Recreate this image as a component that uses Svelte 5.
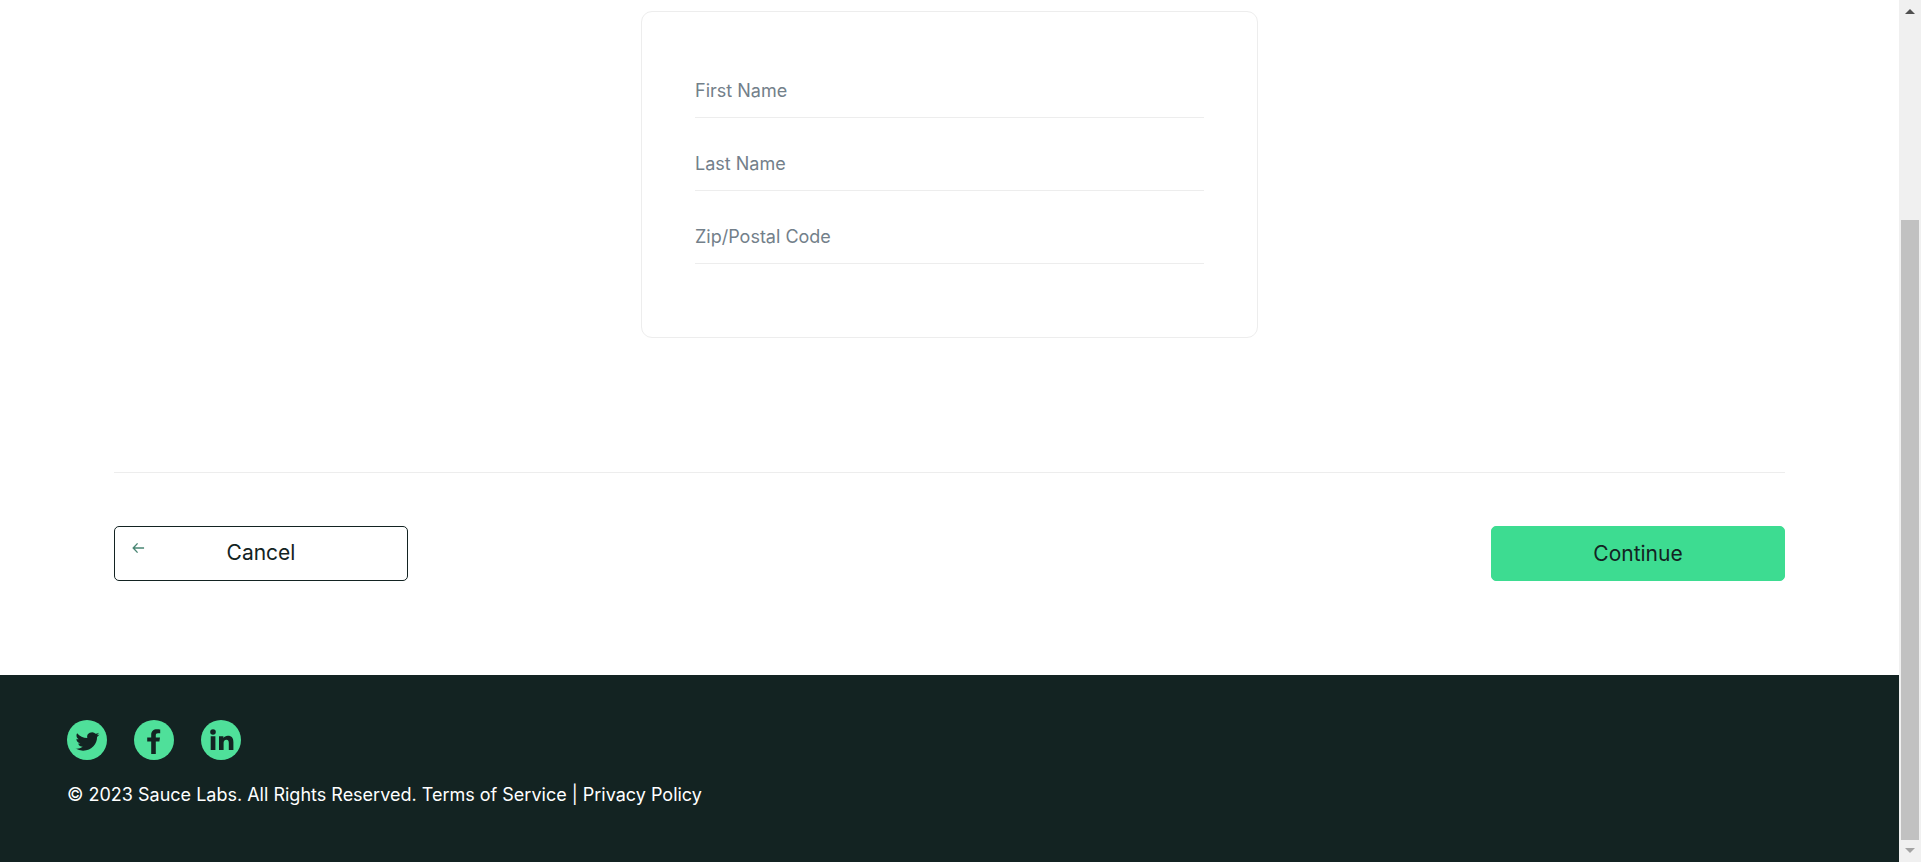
<script>
  const fields = [
    { id: 'first-name', label: 'First Name' },
    { id: 'last-name', label: 'Last Name' },
    { id: 'postal-code', label: 'Zip/Postal Code' }
  ];
</script>

<div class="window">
  <div class="page">
    <form class="checkout" onsubmit={(e) => e.preventDefault()}>
      <div class="card">
        {#each fields as field}
          <input id={field.id} type="text" placeholder={field.label} aria-label={field.label} />
        {/each}
      </div>
      <div class="actions">
        <button type="button" class="cancel">
          <svg class="back" viewBox="0 0 14 12" aria-hidden="true">
            <path d="M1.5 6H13M6 1L1.3 6L6 11" />
          </svg>
          Cancel
        </button>
        <button type="submit" class="continue">Continue</button>
      </div>
    </form>

    <footer>
      <ul class="social">
        <li>
          <a href="#twitter" aria-label="Twitter">
            <svg viewBox="0 0 40 40" aria-hidden="true">
              <circle cx="20" cy="20" r="20" />
              <path
                class="mark"
                transform="translate(8.5 10.2) scale(1 0.94)"
                d="M23.95 4.57a10 10 0 0 1-2.82.77 4.96 4.96 0 0 0 2.16-2.72c-.95.55-2 .95-3.13 1.18a4.92 4.92 0 0 0-8.38 4.48C7.69 8.1 4.07 6.13 1.64 3.16a4.82 4.82 0 0 0-.67 2.48c0 1.71.87 3.21 2.19 4.1a4.9 4.9 0 0 1-2.23-.62v.06a4.92 4.92 0 0 0 3.95 4.83 5 5 0 0 1-2.21.08 4.94 4.94 0 0 0 4.6 3.42A9.87 9.87 0 0 1 0 19.54a13.99 13.99 0 0 0 7.55 2.21c9.05 0 14-7.5 14-13.98 0-.21 0-.42-.02-.63a9.94 9.94 0 0 0 2.46-2.55z"
              />
            </svg>
          </a>
        </li>
        <li>
          <a href="#facebook" aria-label="Facebook">
            <svg viewBox="0 0 40 40" aria-hidden="true">
              <circle cx="20" cy="20" r="20" />
              <path
                class="mark"
                d="M17.2 34V21.6H13.2V17.4H17.2V14.8C17.2 11.2 19.4 9.2 23 9.2C24.6 9.2 25.6 9.4 26.2 9.5V13.2H24C22.3 13.2 21.8 14 21.8 15.3V17.4H26L25.4 21.6H21.8V34Z"
              />
            </svg>
          </a>
        </li>
        <li>
          <a href="#linkedin" aria-label="LinkedIn">
            <svg viewBox="0 0 40 40" aria-hidden="true">
              <circle cx="20" cy="20" r="20" />
              <circle class="mark" cx="12" cy="12" r="2.8" />
              <path
                class="mark"
                d="M9.7 16.2H14.4V30H9.7ZM18 16.2H22.4V18.1C23.3 16.7 24.8 15.8 26.8 15.8C31 15.8 32.4 18.4 32.4 22.2V30H27.8V23.1C27.8 21.2 27.4 19.8 25.4 19.8C23.4 19.8 22.6 21.2 22.6 23.1V30H18Z"
              />
            </svg>
          </a>
        </li>
      </ul>
      <p>© 2023 Sauce Labs. All Rights Reserved. Terms of Service | Privacy Policy</p>
    </footer>
  </div>

  <div class="scrollbar" aria-hidden="true">
    <svg viewBox="0 0 22 22"><path fill="#505050" d="M6 14L11 9L16 14Z" /></svg>
    <div class="thumb"></div>
    <svg viewBox="0 0 22 22"><path fill="#a3a3a3" d="M6 8L11 13L16 8Z" /></svg>
  </div>
</div>

<style>
  :global(body) {
    margin: 0;
    background: #fff;
  }

  .window {
    display: flex;
    min-height: 100vh;
    font-family: Inter, 'Liberation Sans', sans-serif;
    color: #132322;
  }

  .page {
    flex: 1;
    display: flex;
    flex-direction: column;
  }

  .checkout {
    display: flex;
    flex-direction: column;
    padding: 11px 114px 94px;
  }

  .card {
    box-sizing: border-box;
    width: 100%;
    max-width: 617px;
    margin: 0 auto 134px;
    padding: 53px 53px 73px;
    border: 1px solid #ededed;
    border-radius: 11px;
    display: grid;
    gap: 20px;
  }

  input {
    box-sizing: border-box;
    width: 100%;
    height: 53px;
    padding: 0 0 2px;
    border: 0;
    border-bottom: 1px solid #ededed;
    background: transparent;
    font: 400 18px Inter, 'Liberation Sans', sans-serif;
    color: #132322;
    outline: none;
  }

  input::placeholder {
    color: #73808a;
    opacity: 1;
  }

  .actions {
    display: flex;
    justify-content: space-between;
    padding-top: 53px;
    border-top: 1px solid #ededed;
  }

  button {
    position: relative;
    box-sizing: border-box;
    width: 294px;
    height: 55px;
    padding: 0;
    border: 1px solid #132322;
    border-radius: 5px;
    background: #fff;
    font: 400 21px Inter, 'Liberation Sans', sans-serif;
    color: #132322;
  }

  .cancel {
    padding-bottom: 2px;
  }

  .continue {
    background: #3ddc91;
    border-color: #3ddc91;
  }

  .back {
    position: absolute;
    left: 17px;
    top: 15px;
    width: 13px;
    height: 12px;
    fill: none;
    stroke: #4a8674;
    stroke-width: 1.5;
  }

  footer {
    flex: 1;
    padding: 45px 67px;
    background: #132322;
    color: #fff;
  }

  .social {
    display: flex;
    gap: 27px;
    margin: 0 0 22px;
    padding: 0;
    list-style: none;
  }

  .social a,
  .social svg {
    display: block;
    width: 40px;
    height: 40px;
  }

  .social svg {
    fill: #4fe09a;
  }

  .social .mark {
    fill: #132322;
  }

  footer p {
    margin: 0;
    font-size: 18px;
    line-height: 26px;
  }

  .scrollbar {
    flex: none;
    width: 22px;
    background: #f0f0f0;
    display: flex;
    flex-direction: column;
  }

  .scrollbar svg {
    display: block;
    width: 22px;
    height: 22px;
  }

  .thumb {
    flex: 1;
    margin: 198px 2px 0;
    background: #c1c1c1;
  }
</style>
